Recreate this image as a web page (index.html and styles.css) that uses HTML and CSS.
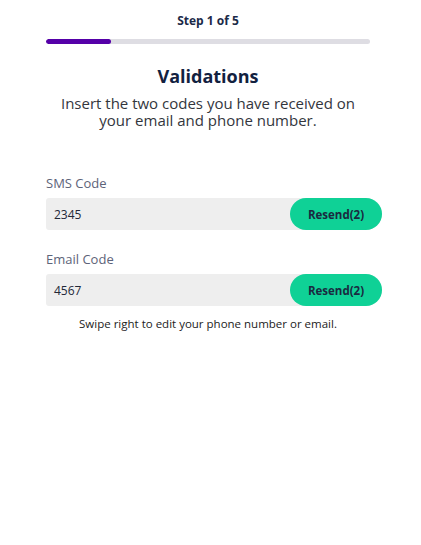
FILE: index.html
```html
<!DOCTYPE html>
<html>
<head>
<meta charset="utf-8">
<link rel="stylesheet" href="styles.css">
</head>
<body>
<main class="page">
  <header class="steps">
    <div class="step-label">Step 1 of 5</div>
    <div class="progress"><div class="progress-fill" style="width:20%"></div></div>
  </header>
  <h1 class="title">Validations</h1>
  <p class="subtitle">Insert the two codes you have received on your email and phone number.</p>

  <div class="field">
    <label class="field-label">SMS Code</label>
    <div class="code-row">
      <span class="code-value">2345</span>
      <button class="resend">Resend(2)</button>
    </div>
  </div>

  <div class="field">
    <label class="field-label">Email Code</label>
    <div class="code-row">
      <span class="code-value">4567</span>
      <button class="resend">Resend(2)</button>
    </div>
  </div>

  <p class="note">Swipe right to edit your phone number or email.</p>
</main>
</body>
</html>
```

FILE: styles.css
```css
* { box-sizing: border-box; }
html, body { margin: 0; padding: 0; background: #fff; }
body { font-family: "Open Sans", "Liberation Sans", sans-serif; }

.page {
  width: 324px;
  margin-left: 46px;
  padding-top: 13px;
}

.steps { display: flex; flex-direction: column; }
.step-label {
  text-align: center;
  font-size: 12px;
  line-height: 16px;
  font-weight: 700;
  color: #1b2a48;
}
.progress {
  margin-top: 10px;
  height: 5px;
  border-radius: 3px;
  background: #dedde3;
  overflow: hidden;
}
.progress-fill {
  height: 100%;
  background: #5500a8;
  border-radius: 3px;
}

.title {
  margin: 20px 0 0;
  text-align: center;
  font-size: 18px;
  line-height: 24px;
  font-weight: 700;
  color: #12213f;
}
.subtitle {
  margin: 7px 0 0;
  padding: 0 8px;
  text-align: center;
  font-size: 15px;
  line-height: 17px;
  color: #33363d;
}

.field { margin-top: 20px; display: flex; flex-direction: column; }
.subtitle + .field { margin-top: 45px; }
.field-label {
  font-size: 13px;
  line-height: 18px;
  color: #5d6379;
  margin-bottom: 6px;
}
.code-row {
  width: 336px;
  height: 32px;
  display: flex;
  align-items: center;
  background: #eeeeee;
  border-radius: 3px 16px 16px 3px;
}
.code-value {
  flex: 1;
  padding-left: 8px;
  font-size: 12px;
  color: #222838;
}
.resend {
  width: 92px;
  height: 32px;
  border: none;
  border-radius: 16px;
  background: #0fd196;
  font-family: "Open Sans", "Liberation Sans", sans-serif;
  font-size: 11.5px;
  font-weight: 700;
  color: #1a2a40;
  padding: 0;
}

.note {
  margin: 10px 0 0;
  text-align: center;
  font-size: 11.5px;
  line-height: 16px;
  color: #222;
}
```
